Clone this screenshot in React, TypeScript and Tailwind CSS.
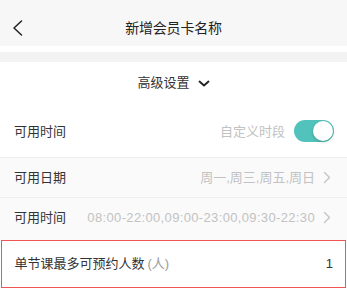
import React from "react";

const font = { fontFamily: '"Liberation Sans", "Noto Sans CJK SC", sans-serif' };

function RightChevron() {
  return (
    <svg width="8" height="13" viewBox="0 0 8 13" className="ml-[8px] shrink-0">
      <path d="M1.5 1.5 L6.5 6.5 L1.5 11.5" fill="none" stroke="#c4c4c4" strokeWidth="1.4" strokeLinecap="round" strokeLinejoin="round" />
    </svg>
  );
}

export default function App() {
  return (
    <div className="w-[347px] h-[289px] overflow-hidden bg-white text-[#333]" style={font}>
      {/* Header */}
      <div className="relative h-[46px] bg-[#f7f7f7] flex items-center justify-center">
        <svg width="12" height="16" viewBox="0 0 12 16" className="absolute left-[12px] top-[20px]">
          <path d="M9.5 1 L2 8 L9.5 15" fill="none" stroke="#222" strokeWidth="1.5" strokeLinecap="round" strokeLinejoin="round" />
        </svg>
        <span className="text-[14px] tracking-[-0.2px] text-[#222] mt-[10px]">新增会员卡名称</span>
      </div>
      <div className="h-[6px] bg-white" />
      <div className="h-[10px] bg-[#f3f3f3]" />

      {/* Advanced settings */}
      <div className="h-[42px] flex items-center justify-center">
        <span className="text-[13px] text-[#333]">高级设置</span>
        <svg width="12" height="7" viewBox="0 0 12 7" className="ml-[8px]">
          <path d="M1.5 1.5 L6 5.5 L10.5 1.5" fill="none" stroke="#222" strokeWidth="1.8" strokeLinecap="round" strokeLinejoin="round" />
        </svg>
      </div>

      {/* Row 1 */}
      <div className="h-[53px] flex items-center justify-between pl-[14px] pr-[13px]">
        <span className="text-[13px] mt-[2px]">可用时间</span>
        <div className="flex items-center">
          <span className="text-[13px] text-[#c2c2c2] mr-[9px] mt-[2px]">自定义时段</span>
          <div className="w-[40px] h-[22px] rounded-full bg-[#52c3bc] flex items-center justify-end pr-[1px]">
            <div className="w-[20px] h-[20px] rounded-full bg-white shadow-[0_1px_3px_rgba(0,0,0,0.25)]" />
          </div>
        </div>
      </div>

      {/* Row 2 */}
      <div className="h-[40px] bg-[#fafafa] border-t border-[#eeeeee] flex items-center justify-between pl-[14px] pr-[16px]">
        <span className="text-[13px]">可用日期</span>
        <div className="flex items-center">
          <span className="text-[13px] text-[#c2c2c2]">周一,周三,周五,周日</span>
          <RightChevron />
        </div>
      </div>

      {/* Row 3 */}
      <div className="h-[43px] pb-[3px] bg-[#fafafa] border-t border-[#eeeeee] flex items-center justify-between pl-[14px] pr-[16px]">
        <span className="text-[13px]">可用时间</span>
        <div className="flex items-center">
          <span className="text-[13px] text-[#c2c2c2] tracking-[0.35px]">08:00-22:00,09:00-23:00,09:30-22:30</span>
          <RightChevron />
        </div>
      </div>

      {/* Highlighted row */}
      <div className="mx-px h-[48px] bg-white border-[1.5px] border-[#f05555] flex items-center justify-between pl-[12.5px] pr-[12px]">
        <span className="text-[13px]">
          单节课最多可预约人数<span className="text-[#999] ml-[3px]">(人)</span>
        </span>
        <span className="text-[13px]">1</span>
      </div>
    </div>
  );
}
